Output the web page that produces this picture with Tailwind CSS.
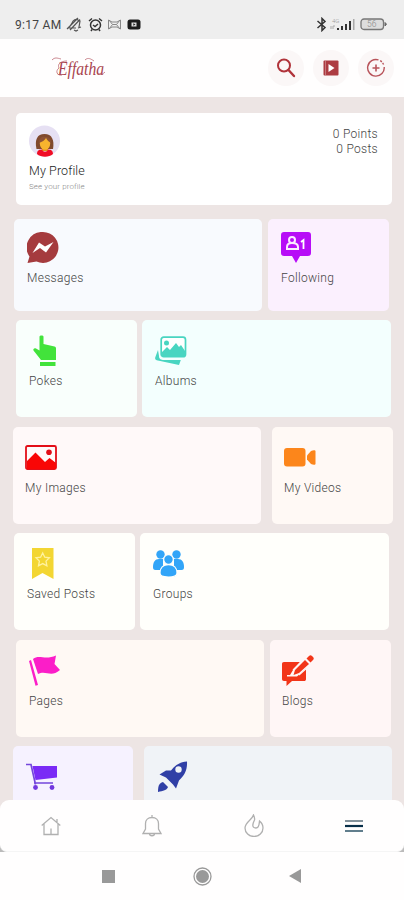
<!DOCTYPE html>
<html lang="en">
<head>
<meta charset="utf-8">
<title>Effatha</title>
<script src="https://cdn.jsdelivr.net/npm/@tailwindcss/browser@4"></script>
</head>
<body class="w-[404px] h-[900px] overflow-hidden bg-[#ede5e4] font-['Roboto',sans-serif] text-[#444] font-light text-[12px] leading-5 tracking-[0.3px]">
<div class="flex h-[900px] flex-col">
  <!-- Status bar -->
  <div class="flex h-[39px] shrink-0 items-start bg-[#eee] pl-[15px] pr-[17px] pt-[15px]">
    <span class="w-[49px] whitespace-nowrap text-[12px] font-normal tracking-[0.3px] text-[#444]">9:17 AM</span>
    <svg class="ml-[2px] mt-[2px]" width="17" height="15" viewBox="0 0 17 15" fill="none" stroke="#555" stroke-width="1.2"><path d="M2 11h8M3.500 10 6 6c1-3 4-4.500 6-3l2 1-1 6M12 11l3-1M8 13l2 1 2-1M1 12 12 1M4 13 14 2.500"/></svg>
    <svg class="ml-[5px] mt-[2px]" width="15" height="15" viewBox="0 0 15 15" fill="none" stroke="#333" stroke-width="1.5"><circle cx="7.500" cy="8" r="5"/><path d="M1 4 4 1.500M14 4 11 1.500M5 8l2 1.500L10 7M4 12.500 3 14M11 12.500l1 1.500"/></svg>
    <svg class="ml-[5px] mt-[4px]" width="13" height="11" viewBox="0 0 13 11" fill="none" stroke="#888" stroke-width="1"><path d="M.5 1v9L4 8h5l3.500 2V1L9 3H4zM1 1l3.500 4.500L1 10M12 1 8.500 5.500 12 10M4.500 5.500h4"/></svg>
    <svg class="ml-[6px] mt-[4px]" width="14" height="11" viewBox="0 0 14 11"><rect x=".5" y=".5" width="13" height="10" rx="2.500" fill="#1c1c1c"/><path d="M4.500 3.500h5v4h-5z" fill="#ddd"/><path d="M6.300 4.300 8.500 5.500 6.300 6.700z" fill="#222"/></svg>
    <div class="ml-auto flex items-start">
      <svg class="mr-[-2px] mt-[2px]" width="12" height="15" viewBox="0 0 12 15" fill="none" stroke="#333" stroke-width="1.500"><path d="M1.500 4 9 10.500 6 13.500v-12L9 4.500 1.500 11"/></svg>
      <svg class="ml-[4px] mt-[2px]" width="26" height="15" viewBox="0 0 26 15"><text x="2" y="5.500" font-size="6" fill="#999" letter-spacing="0">4G</text><path d="M1 9v3M3 12V9h2" stroke="#aaa" fill="none"/><path d="M7 11h2v2H7zM11 9h2v4h-2zM15 7h2v6h-2zM19 4h2v9h-2z" fill="#333"/><path d="M23 2h1.500v11H23z" fill="#aaa"/></svg>
      <svg class="ml-[4px] mt-[3px]" width="27" height="13" viewBox="0 0 27 13"><rect x="1" y="1" width="22.500" height="10.500" rx="3" fill="#ddd" stroke="#777" stroke-width="1.300"/><path d="M25 4.500 26.500 6.200 25 8z" fill="#666" stroke="#666"/><text x="7" y="9.300" font-size="8.500" fill="#888" letter-spacing="0">56</text></svg>
    </div>
  </div>
  <!-- App header -->
  <div class="flex h-[58px] shrink-0 items-center bg-[#fffefe] pl-[52px] pr-[10px]">
    <svg class="overflow-visible" width="56" height="30" viewBox="0 0 56 30" fill="none">
      <text x="6" y="22" font-family="Liberation Serif" font-style="italic" font-size="18" font-weight="400" fill="#a8434e" letter-spacing="0" textLength="46" lengthAdjust="spacingAndGlyphs">Effatha</text>
      <path d="M0 7C3 4 5 5 9 6M15 8c-6 0-10 3-8 7-4 3-2 8 3 7M33 7c3-3 6-1 9 1M46 21c3 1 5 0 7-2" stroke="#bd6a73" stroke-width=".8"/>
    </svg>
    <div class="ml-auto flex gap-[9px]">
      <span class="flex size-9 items-center justify-center rounded-full bg-[#fbf7f7]"><svg width="20" height="20" viewBox="0 0 20 20" fill="none" stroke="#b0333a" stroke-linecap="round"><circle cx="8" cy="7.500" r="6" stroke-width="2"/><path d="m12.500 12 5.500 6" stroke-width="2.400"/></svg></span>
      <span class="flex size-9 items-center justify-center rounded-full bg-[#fbf7f7]"><svg width="16" height="16" viewBox="0 0 16 16"><rect x=".5" y=".5" width="15" height="15" rx="1" fill="#ad3c42"/><path d="M2.500 1v14" stroke="#c4777b"/><path d="M5.500 4v8l6-4z" fill="#fff"/></svg></span>
      <span class="flex size-9 items-center justify-center rounded-full bg-[#fbf7f7]"><svg width="20" height="20" viewBox="0 0 20 20" fill="none" stroke="#b8535a" stroke-width="1.400"><path d="M12.500 1.900A8.300 8.300 0 1 0 18.200 9"/><path d="M10 6.500v7M6.500 10h7" stroke-width="1.600"/><path d="M14.200 2.700A8.300 8.300 0 0 1 17.600 6.600" stroke-dasharray="2 1.200"/></svg></span>
    </div>
  </div>
  <!-- Menu -->
  <main class="h-[703px] shrink-0 overflow-hidden pt-4">
    <section class="ml-[16px] flex h-[92px] w-[376px] justify-between rounded-[5px] bg-white pl-[13px] pr-[14px] pt-[12px]">
      <div>
        <svg width="32" height="32" viewBox="0 0 32 32"><circle cx="15.500" cy="16" r="15.500" fill="#e6e0f3"/><path d="M7.500 24C5.500 15 8 9 15.500 9S25.500 15 24 24z" fill="#80492e"/><path d="M13 20h6v6h-6z" fill="#df931f"/><ellipse cx="16" cy="18.500" rx="5.200" ry="6.300" fill="#f7b42e"/><path d="M10 18c0-6 4-7 6-6 4 0 6 2 6 6-2-1-4-3-5-5-1 2-4 4-7 5z" fill="#8d5235"/><path d="M8 29c0-4 3-4.500 5-4.500 1 3 5 3 6 0 2 0 5 .5 5 4.500-4 3.500-12 3.500-16 0z" fill="#f00d25"/></svg>
        <div class="mt-[4px] text-[12.500px] tracking-[0.1px] text-[#222]">My Profile</div>
        <div class="text-[8px] leading-[12px] tracking-[0.1px] text-[#888]">See your profile</div>
      </div>
      <div class="mt-[2px] text-right leading-[15px]">0 Points<br>0 Posts</div>
    </section>

    <div class="ml-[14px] mt-[14px] flex h-[92px] gap-[6px]">
      <section class="w-[248px] rounded-[5px] bg-[#f8fafe] pl-[13px] pt-[13px]">
        <svg width="32" height="31" viewBox="0 0 32 31"><path d="M16 0a15.500 15.500 0 1 1-6.500 29.600L.5 31l2-6.500A15.500 15.500 0 0 1 16 0z" fill="#a53b3e"/><path d="m5.500 21 6.500-10.500 6 4 8.500-4.500-7.500 10.500-6-4.500z" fill="#fff"/></svg>
        <div class="mt-[5px]">Messages</div>
      </section>
      <section class="w-[121px] rounded-[5px] bg-[#fbf0fe] pl-[13px] pt-[13px]">
        <svg width="32" height="31" viewBox="0 0 32 31"><path d="M3 0h24a3 3 0 0 1 3 3v18a3 3 0 0 1-3 3h-8l-4 7-4-7H3a3 3 0 0 1-3-3V3a3 3 0 0 1 3-3z" fill="#b70df7"/><g fill="none" stroke="#fbeaff" stroke-width="2"><circle cx="11" cy="8" r="3"/><path d="M6 17v-2c0-3 2-4 5-4s6 1 6 4v2z"/></g><path d="M20 10l2.500-2V17" fill="none" stroke="#fff" stroke-width="1.800"/></svg>
        <div class="mt-[5px]">Following</div>
      </section>
    </div>

    <div class="ml-[16px] mt-[9px] flex h-[97px] gap-[5px]">
      <section class="w-[121px] rounded-[5px] bg-[#f9fffc] pl-[13px] pt-[15px]">
        <svg width="32" height="31" viewBox="0 0 32 31" fill="#42e33b"><path d="M10.500 1.500c0-1.500 4-1.500 4 0V9l11 2.500c1 .3 1.500 1 1.500 2V25H12L4.500 15.500c-.8-1.500 1-3 2.500-2l3.500 2zM11 27h15.500v4H11z"/></svg>
        <div class="mt-[5px]">Pokes</div>
      </section>
      <section class="w-[249px] rounded-[5px] bg-[#f3fffe] pl-[13px] pt-[15px]">
        <svg class="overflow-visible" width="32" height="31" viewBox="0 0 32 31"><path d="M3 15 .2 22.500c-.3 1.500.2 2.300 1.500 2.700L24 30l1.800-5H9c-3 0-5-1-5-4z" fill="#49d5c1"/><rect x="6.200" y="2.200" width="24.300" height="19.500" rx="2.500" fill="#fff" stroke="#49d5c1" stroke-width="1.700"/><circle cx="11.500" cy="8" r="2.500" fill="#49d5c1"/><path d="m7 17 5-5 3 3 6-7 3 4 2-2 4 6v5H7z" fill="#49d5c1"/></svg>
        <div class="mt-[5px]">Albums</div>
      </section>
    </div>

    <div class="ml-[13px] mt-[10px] flex h-[97px] gap-[11px]">
      <section class="w-[248px] rounded-[5px] bg-[#fff9f9] pl-[12px] pt-[15px]">
        <svg width="32" height="31" viewBox="0 0 32 31"><rect x="1" y="4" width="30" height="23" rx="1.500" fill="#fffafa" stroke="#e30e18" stroke-width="1.800"/><path d="m2 19 8.500-8.500L20 20l4.500-4 6.500 5v6H2z" fill="#f90606"/><circle cx="24" cy="10.300" r="2.800" fill="#e30e18"/></svg>
        <div class="mt-[5px]">My Images</div>
      </section>
      <section class="w-[121px] rounded-[5px] bg-[#fff9f5] pl-[12px] pt-[15px]">
        <svg width="32" height="31" viewBox="0 0 32 31" fill="#fc861b"><rect x="0" y="6" width="21.500" height="18.500" rx="3"/><path d="M23 13.500 27 9c2-1 4.500-1 4.500 0v13c0 1-2.500 1-4.500 0l-4-4.500z"/></svg>
        <div class="mt-[5px]">My Videos</div>
      </section>
    </div>

    <div class="ml-[14px] mt-[9px] flex h-[97px] gap-[5px]">
      <section class="w-[121px] rounded-[5px] bg-[#fffffb] pl-[13px] pt-[15px]">
        <svg width="32" height="31" viewBox="0 0 32 31"><path d="M5 0h21.500v31L15.500 25 5 31z" fill="#f3d632"/><path d="m15.700 5 2.100 4.200 4.600.6-3.400 3.300.9 4.700-4.200-2.200-4.200 2.200.9-4.700L9 9.800l4.600-.6z" fill="none" stroke="#fff2a0" stroke-width="1.300"/></svg>
        <div class="mt-[5px]">Saved Posts</div>
      </section>
      <section class="w-[249px] rounded-[5px] bg-[#fffffb] pl-[13px] pt-[15px]">
        <svg width="32" height="31" viewBox="0 0 32 31" fill="#32a5f8"><circle cx="7.500" cy="6.500" r="4.200"/><circle cx="23.500" cy="6.500" r="4.200"/><path d="M0 19c0-5 2-8 6-8h4v11H2.500C.5 22 0 21 0 19zM31 19c0-5-2-8-6-8h-4v11h7.500c2 0 2.500-1 2.500-3z"/><g stroke="#fffffb" stroke-width="1.200"><circle cx="15.500" cy="11.500" r="4.800"/><path d="M7 25c0-5 3-8.300 8.500-8.300S24 20 24 25c0 3-2.500 4-8.500 4S7 28 7 25z"/></g></svg>
        <div class="mt-[5px]">Groups</div>
      </section>
    </div>

    <div class="ml-[16px] mt-[10px] flex h-[97px] gap-[6px]">
      <section class="w-[248px] rounded-[5px] bg-[#fff9f4] pl-[13px] pt-[15px]">
        <svg width="32" height="31" viewBox="0 0 32 31" fill="#fb1ec8"><path d="m0 6 2-1 7 25-2.500.8zM4 4c6-5 12 1.500 23-3.500L25.500 9l5.500 6c-9 8-14 0-22 4z"/></svg>
        <div class="mt-[5px]">Pages</div>
      </section>
      <section class="w-[121px] rounded-[5px] bg-[#fff6f6] pl-[12px] pt-[15px]">
        <svg width="32" height="31" viewBox="0 0 32 31" fill="#f23519"><path d="M2 7h16l-7 8-3 5H5v1.500h10l9-8V24c0 1.500-.7 2-2 2H10l-5.500 5V26H2c-1.300 0-2-.7-2-2V9c0-1.300.7-2 2-2z"/><path d="m13 15 10-10 4 4-10 9-5.500 2zM24.500 3.500 27 1c1-1 2-1 3 0l1 1c1 1 1 2 0 3l-2.500 2.500z"/><path d="M11 15 21.500 4.500M17 20l9-8" stroke="#fff6f6" stroke-width="1.200"/></svg>
        <div class="mt-[5px]">Blogs</div>
      </section>
    </div>

    <div class="ml-[13px] mt-[9px] flex h-[97px] gap-[11px]">
      <section class="w-[120px] rounded-[5px] bg-[#f6f2ff] pl-[13px] pt-[15px]">
        <svg width="32" height="31" viewBox="0 0 32 31"><path d="M0 3.500h5l4.500 20M8 22h19" fill="none" stroke="#7447dc" stroke-width="1.700"/><path d="M6.500 5H31v11.500L9.500 19z" fill="#7a2bf6"/><circle cx="9.500" cy="26.500" r="2.400" fill="#7138df"/><circle cx="26" cy="26.500" r="2.400" fill="#7138df"/></svg>
      </section>
      <section class="w-[248px] rounded-[5px] bg-[#f0f3f7] pl-[13px] pt-[15px]">
        <svg width="32" height="31" viewBox="0 0 32 31" fill="#303fa6"><path d="M30 .5c.5 9-3 14-8 19l-3 8-3-4-7-7-6.500-3 6.500-4h5C18 4 23 1 30 .5z"/><circle cx="21.500" cy="8.500" r="3.200" fill="#f0f3f7"/><path d="M1 31c0-6 1-9 5-10l5 5c-1 3-5 4-10 5z"/></svg>
      </section>
    </div>
  </main>

  <!-- Tab bar -->
  <div class="h-[52px] shrink-0 bg-[linear-gradient(#ede5e4_50%,#bbb_50%)]">
    <nav class="flex h-[52px] items-center justify-around rounded-t-[9px] rounded-b-[7px] border-b border-[#f5f5f5] bg-[#fffefe] text-[#b0b0b0]">
      <svg width="20" height="20" viewBox="0 0 20 20" fill="none" stroke="currentColor" stroke-width="1.300"><path d="m.7 9.500 9.300-8 9.300 8M3 8v10.500h14V8M16 6V3M10 18v-5.500"/></svg>
      <svg width="20" height="22" viewBox="0 0 20 22" fill="none" stroke="currentColor" stroke-width="1.300"><path d="M3.500 14V8.500C3.500 5 6 2.500 10 2.500s6.500 2.500 6.500 6V14l2.500 4.500H1zM10 0v2.500M7.500 18.500c0 3 5 3 5 0"/></svg>
      <svg width="20" height="23" viewBox="0 0 20 23" fill="none" stroke="currentColor" stroke-width="1.300"><path d="M9.500 1C8 6 1 8 1 14a9 8.500 0 0 0 18 0c0-3-1-5-3.500-7-.5 3 0 7-3.500 7-5 0-3-5-1.500-8C11 4 10 2 9.500 1z"/></svg>
      <svg width="18" height="14" viewBox="0 0 18 14"><path d="M0 2h18" stroke="#83929b" stroke-width="2"/><path d="M0 7h18" stroke="#082f49" stroke-width="2.200"/><path d="M0 12h18" stroke="#617e8d" stroke-width="2"/></svg>
    </nav>
  </div>
  <!-- System navigation -->
  <div class="flex h-12 shrink-0 items-center bg-[#fffefe] pl-[102px]">
    <span class="size-[13px] bg-[#999]"></span>
    <svg class="ml-[78px]" width="19" height="19" viewBox="0 0 19 19"><circle cx="9.500" cy="9.500" r="8.500" fill="none" stroke="#999" stroke-width="1.300"/><circle cx="9.500" cy="9.500" r="6.500" fill="#999"/></svg>
    <svg class="ml-[77px]" width="12" height="14" viewBox="0 0 12 14"><path d="M0 7 12 0v14z" fill="#999"/></svg>
  </div>
</div>
</body>
</html>
